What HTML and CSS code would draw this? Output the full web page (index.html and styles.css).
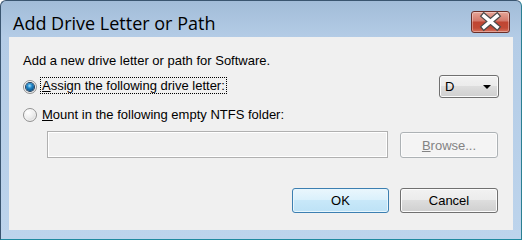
FILE: index.html
```html
<!DOCTYPE html>
<html lang="en">

<head>
    <meta charset="UTF-8">
    <title>Add Drive Letter or Path</title>
    <link rel="stylesheet" href="styles.css">
</head>

<body>

<div class="window">
    <!-- Title bar -->
    <header class="titlebar">
        <span class="title">Add Drive Letter or Path</span>
        <button class="close-btn" aria-label="Close">
            <svg width="39" height="22" viewBox="0 0 39 22">
                <path d="M13 5 L26 16 M26 5 L13 16" stroke="#4a4a4a" stroke-width="6" stroke-linecap="square"/>
                <path d="M13 5 L26 16 M26 5 L13 16" stroke="#ffffff" stroke-width="3.6" stroke-linecap="square"/>
            </svg>
        </button>
    </header>

    <!-- Dialog body -->
    <section class="client">
        <p class="intro">Add a new drive letter or path for Software.</p>

        <div class="option-row first">
            <span class="radio checked"></span>
            <span class="label focused"><u>A</u>ssign the following drive letter:</span>
            <div class="dropdown">
                <span>D</span>
                <span class="arrow"></span>
            </div>
        </div>

        <div class="option-row second">
            <span class="radio"></span>
            <span class="label"><u>M</u>ount in the following empty NTFS folder:</span>
        </div>

        <div class="folder-row">
            <div class="folder-input"></div>
            <button class="btn disabled"><u>B</u>rowse...</button>
        </div>

        <div class="actions">
            <button class="btn default">OK</button>
            <button class="btn">Cancel</button>
        </div>
    </section>
</div>

</body>

</html>
```

FILE: styles.css
```css
* {
    margin: 0;
    padding: 0;
    box-sizing: border-box;
}

body {
    width: 522px;
    height: 240px;
    overflow: hidden;
    background-color: #ffffff;
}

.window {
    width: 522px;
    height: 240px;
    display: flex;
    flex-direction: column;
    padding: 0 8px 9px 8px;
    border: 1px solid #3a5570;
    border-right-color: #2a7f92;
    border-bottom-color: #1f8aa0;
    border-radius: 6px 6px 0 0;
    background: linear-gradient(#a2bcd8, #b4cce6 36px, #bdd4ec);
}

.titlebar {
    height: 36px;
    display: flex;
    justify-content: space-between;
    align-items: flex-start;
}

.titlebar .title {
    font-family: "Open Sans", sans-serif;
    font-size: 18px;
    line-height: 18px;
    color: #000;
    padding: 13px 0 0 4px;
}

.close-btn {
    width: 39px;
    height: 22px;
    margin: 10px 3px 0 0;
    border: 1px solid #6b2f28;
    border-radius: 3px;
    background: linear-gradient(#e6a597, #d3786a 45%, #bf4532 50%, #c24a36 80%, #d8735f);
    box-shadow: inset 0 0 0 1px rgba(255, 255, 255, 0.35);
    display: flex;
    align-items: center;
    justify-content: center;
}

.close-btn svg {
    display: block;
    margin: -1px;
}

.client {
    flex: 1;
    background-color: #f0f0f0;
    padding: 0 15px 0 14px;
    font-family: "Liberation Sans", Arial, sans-serif;
    font-size: 13px;
    line-height: 15px;
    color: #000;
    display: flex;
    flex-direction: column;
}

.intro {
    margin-top: 16px;
}

.option-row {
    display: flex;
    align-items: center;
}

.option-row.first {
    margin-top: 7px;
    height: 23px;
}

.option-row.second {
    margin-top: 9px;
    height: 15px;
}

.radio {
    width: 14px;
    height: 14px;
    border-radius: 50%;
    border: 1px solid #929292;
    background: radial-gradient(circle at 35% 30%, #ffffff, #ececec 50%, #c4c4c4);
    box-shadow: inset 0 0 0 1px rgba(255, 255, 255, 0.6);
    margin-right: 4px;
    flex-shrink: 0;
    display: flex;
    align-items: center;
    justify-content: center;
}

.radio.checked::after {
    content: "";
    width: 8px;
    height: 8px;
    border-radius: 50%;
    background: radial-gradient(circle at 45% 35%, #a6e4ff, #1f86c8 35%, #0a4f85 75%, #062f52);
    box-shadow: 0 0 0 1px #203c58;
}

.label {
    padding: 0 1px;
}

.label.focused {
    outline: 1px dotted #000;
    outline-offset: 0;
    margin-top: -2px;
}

.dropdown {
    margin-left: auto;
    margin-right: -1px;
    width: 60px;
    height: 23px;
    border: 1px solid #707070;
    border-radius: 3px;
    background: linear-gradient(#f2f2f2, #ebebeb 50%, #dddddd 50%, #cfcfcf);
    box-shadow: inset 0 0 0 1px #fbfbfb;
    display: flex;
    align-items: center;
    justify-content: space-between;
    padding: 0 7px 0 5px;
}

.dropdown .arrow {
    width: 0;
    height: 0;
    border-left: 4px solid transparent;
    border-right: 4px solid transparent;
    border-top: 4px solid #000;
}

.folder-row {
    margin-top: 9px;
    display: flex;
    align-items: flex-start;
    gap: 12px;
}

.folder-input {
    margin-left: 24px;
    width: 341px;
    height: 27px;
    border: 1px solid #b0b0b0;
    box-shadow: inset 0 0 0 1px #ffffff;
    background-color: #f0f0f0;
}

.btn {
    width: 98px;
    height: 25px;
    border: 1px solid #707070;
    border-radius: 3px;
    background: linear-gradient(#f2f2f2, #ebebeb 50%, #dddddd 50%, #cfcfcf);
    box-shadow: inset 0 0 0 1px #fcfcfc;
    font-family: "Liberation Sans", Arial, sans-serif;
    font-size: 13px;
    color: #000;
}

.btn.disabled {
    margin-top: 1px;
    height: 26px;
    border-color: #adb2b5;
    background: #f4f4f4;
    color: #838383;
}

.btn.default {
    width: 97px;
    border-color: #3c7fb1;
    background: linear-gradient(#eaf6fd, #d9f0fc 50%, #c8e8f9 50%, #bde2f6);
    box-shadow: inset 0 0 0 1px #e8f6fd;
}

.actions {
    margin-top: 30px;
    display: flex;
    justify-content: flex-end;
    gap: 11px;
}
```
